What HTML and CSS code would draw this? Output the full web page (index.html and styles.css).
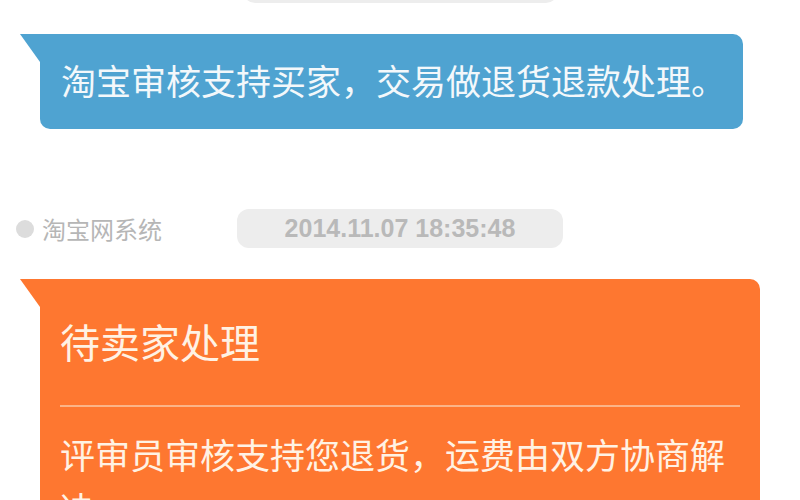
FILE: index.html
```html
<!DOCTYPE html>
<html lang="zh-CN">
<head>
  <meta charset="UTF-8" />
  <meta name="viewport" content="width=device-width, initial-scale=1.0" />
  <title>退款详情</title>
  <link rel="stylesheet" href="styles.css">
</head>
<body>

  <div class="chat">
    <!-- earlier timestamp pill, scrolled out of view -->
    <div class="meta meta-cut">
      <span></span>
      <div class="stamp stamp-short"></div>
      <span></span>
    </div>

    <div class="bubble bubble-blue">
      <p class="msg">淘宝审核支持买家，交易做退货退款处理。</p>
    </div>

    <div class="meta">
      <div class="sender">
        <span class="dot"></span>
        <span class="sender-name">淘宝网系统</span>
      </div>
      <div class="stamp">2014.11.07 18:35:48</div>
      <span></span>
    </div>

    <div class="bubble bubble-orange">
      <h2 class="card-title">待卖家处理</h2>
      <div class="divider"></div>
      <p class="msg">评审员审核支持您退货，运费由双方协商解决。</p>
    </div>
  </div>

</body>
</html>
```

FILE: styles.css
```css
* {
  margin: 0;
  padding: 0;
  box-sizing: border-box;
}

body {
  background: #ffffff;
  font-family: "Noto Sans CJK SC", "Noto Sans", sans-serif;
  overflow: hidden;
}

.chat {
  display: flex;
  flex-direction: column;
}

/* sender / time row */
.meta {
  display: grid;
  grid-template-columns: 1fr auto 1fr;
  align-items: center;
  height: 39px;
  margin-top: 80px;
}

.meta-cut {
  margin-top: -36px;
}

.sender {
  display: flex;
  align-items: center;
  padding-left: 16px;
}

.dot {
  width: 18px;
  height: 18px;
  border-radius: 50%;
  background: #dcdcdc;
  margin-right: 8px;
}

.sender-name {
  font-size: 24px;
  color: #b6b6b6;
  line-height: 1;
}

.stamp {
  width: 326px;
  height: 39px;
  border-radius: 12px;
  background: #ededed;
  color: #b9b9b9;
  font-family: "Liberation Sans", Arial, sans-serif;
  font-weight: bold;
  font-size: 25px;
  line-height: 39px;
  text-align: center;
}

.stamp-short {
  width: 315px;
}

/* message bubbles */
.bubble {
  position: relative;
  margin-left: 40px;
  border-radius: 0 10px 10px 10px;
}

.bubble::before {
  content: "";
  position: absolute;
  left: -20px;
  top: 0;
  border-left: 20px solid transparent;
  border-top: 28px solid;
  border-top-color: inherit;
}

.bubble-blue {
  margin-top: 31px;
  margin-right: 57px;
  padding: 19px 10px 22px 21px;
  background: #4fa3d1;
  border-top-color: #4fa3d1;
  color: #f3f8fb;
}

.bubble-orange {
  margin-top: 31px;
  margin-right: 40px;
  padding: 34px 20px 40px;
  background: #fe7730;
  border-top-color: #fe7730;
  color: #fff2e4;
}

.msg {
  font-size: 35px;
  line-height: 54px;
}

.card-title {
  font-size: 40px;
  font-weight: normal;
  line-height: 56px;
}

.divider {
  height: 2px;
  background: #fbb488;
  margin: 36px 0 20px;
}
```
